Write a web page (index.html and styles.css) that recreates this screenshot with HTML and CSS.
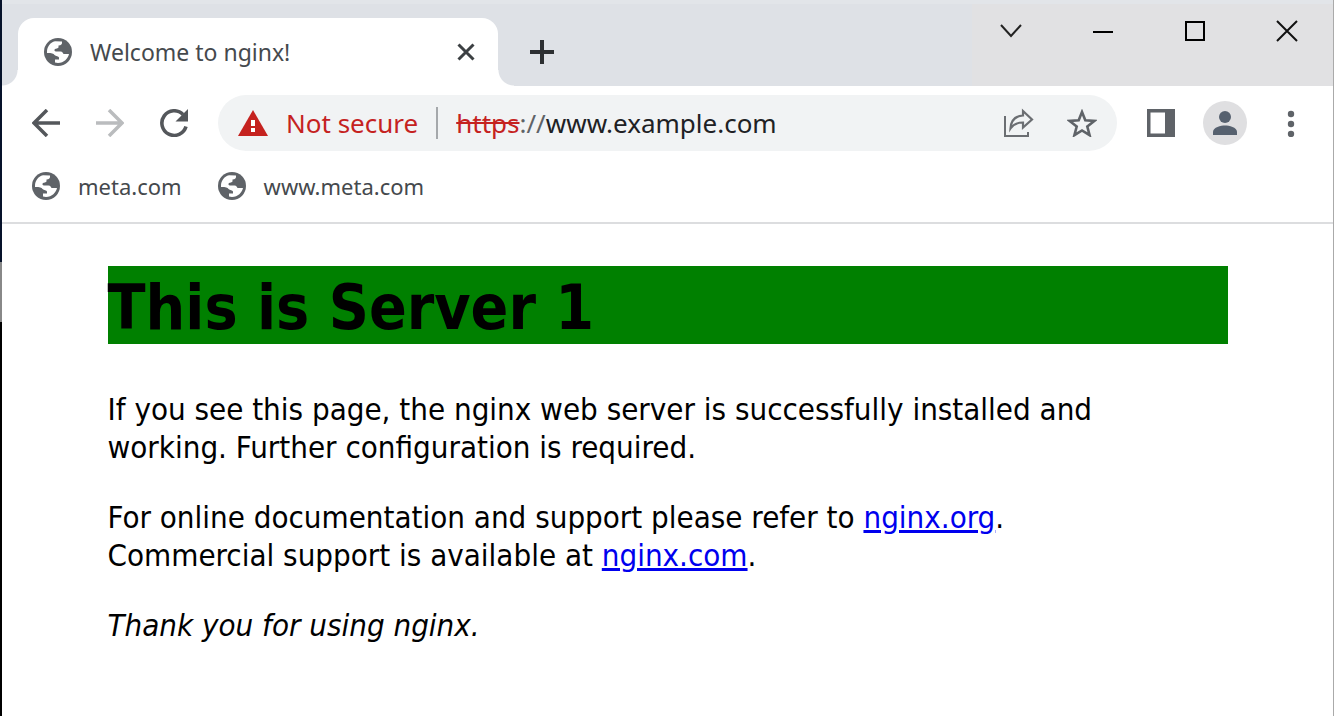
FILE: index.html
```html
<!DOCTYPE html>
<html lang="en">
<head>
<meta charset="utf-8">
<title>Welcome to nginx!</title>
<link rel="stylesheet" href="styles.css">
</head>
<body>
<svg class="defs" aria-hidden="true">
  <symbol id="globe" viewBox="0 0 28 28">
    <circle cx="14" cy="14" r="14" fill="#5f6368"/>
    <path fill="#fff" d="M3 14C3 9 6 4.500 11 3.300L18 3.500C18.500 6 17 7.500 14.500 7.500V9.500C14 10.500 12 10.500 11 11C10 12 10.500 13.500 12 13.500H16.500C18.500 13.500 19 15 19.500 16H25C24 20.500 20 25 14 25L11 24.500V21.500H15V19.500C14.500 18 12 18.500 10.500 17C9.500 15.500 8 15 3 15Z"/>
  </symbol>
</svg>
<div class="window">
  <header class="tabstrip">
    <div class="tab">
      <svg class="globe"><use href="#globe"/></svg>
      <span class="tab-title">Welcome to nginx!</span>
      <button class="icon-btn tab-close" aria-label="Close tab"><svg width="18" height="18" viewBox="0 0 18 18"><path d="M1.500 1.500l15 15M16.500 1.500l-15 15" fill="none" stroke="#3c4043" stroke-width="3"/></svg></button>
    </div>
    <button class="icon-btn new-tab" aria-label="New tab"><svg width="24" height="24" viewBox="0 0 24 24"><path d="M12 0v24M0 12h24" stroke="#2c2f32" stroke-width="4"/></svg></button>
    <div class="caption">
      <button class="icon-btn" aria-label="Search tabs"><svg width="22" height="22" viewBox="0 0 22 22"><path d="M1 5l10 11L21 5" fill="none" stroke="#222" stroke-width="2"/></svg></button>
      <button class="icon-btn" aria-label="Minimize"><svg width="22" height="22" viewBox="0 0 22 22"><path d="M1 12h20" stroke="#000" stroke-width="2"/></svg></button>
      <button class="icon-btn" aria-label="Maximize"><svg width="22" height="22" viewBox="0 0 22 22"><path d="M2 2h18v18H2z" fill="none" stroke="#000" stroke-width="2"/></svg></button>
      <button class="icon-btn" aria-label="Close"><svg width="22" height="22" viewBox="0 0 22 22"><path d="M1 1l20 20M21 1L1 21" stroke="#111" stroke-width="2"/></svg></button>
    </div>
  </header>
  <nav class="toolbar" aria-label="Browser toolbar">
    <button class="icon-btn" aria-label="Back"><svg width="28" height="28" viewBox="0 0 28 28"><path d="M28 14H2M15 1L2 14l13 13" fill="none" stroke="#54575b" stroke-width="3.500"/></svg></button>
    <button class="icon-btn" aria-label="Forward"><svg width="28" height="28" viewBox="0 0 28 28"><path d="M0 14h26M13 1l13 13-13 13" fill="none" stroke="#babcbe" stroke-width="3.500"/></svg></button>
    <button class="icon-btn" aria-label="Reload"><svg width="28" height="28" viewBox="0 0 28 28"><path d="M26 17.500A12.300 12.300 0 1 1 23 5.500" fill="none" stroke="#54575b" stroke-width="3.600"/><path d="M28 0v12.500H15.500z" fill="#54575b"/></svg></button>
    <div class="omnibox">
      <svg width="30" height="26" viewBox="0 0 30 26"><path d="M15 0l15 26H0z" fill="#c5221f"/><path d="M13 10h4v6h-4zM13 18h4v4h-4z" fill="#fff"/></svg>
      <span class="warning">Not secure</span>
      <span class="divider"></span>
      <span class="url"><s>https</s><span class="scheme">://</span>www.example.com</span>
      <button class="icon-btn share" aria-label="Share"><svg width="32" height="30" viewBox="0 0 32 30"><path d="M2 8v20h23v-4" fill="none" stroke="#6b6e72" stroke-width="2"/><path d="M20 3l9 8.500-9 8v-5c-6 0-9.500 1.500-12.500 6C8 13 12 8 20 7.500z" fill="none" stroke="#6b6e72" stroke-width="2.200"/></svg></button>
      <button class="icon-btn star" aria-label="Bookmark"><svg width="30" height="28" viewBox="0 0 30 28"><path d="M15 3l3.300 8.300 9 .6-7 5.700 2.300 8.600L15 21.500l-7.600 4.700 2.300-8.600-7-5.700 9-.6z" fill="none" stroke="#5f6368" stroke-width="2.600"/></svg></button>
    </div>
    <button class="icon-btn" aria-label="Side panel"><svg width="28" height="28" viewBox="0 0 28 28"><path d="M0 0h28v28H0z" fill="#5f6368"/><path d="M3.500 3.500H18v21H3.500z" fill="#fff"/></svg></button>
    <button class="icon-btn avatar" aria-label="Profile"><svg width="26" height="26" viewBox="0 0 26 26"><circle cx="13" cy="7" r="6" fill="#56616f"/><path d="M1 25v-3c0-5 8-6.500 12-6.500S25 17 25 22v3z" fill="#56616f"/></svg></button>
    <button class="icon-btn menu" aria-label="Menu"><svg width="8" height="28" viewBox="0 0 8 28"><g fill="#5f6368"><circle cx="4" cy="5" r="3.200"/><circle cx="4" cy="15" r="3.200"/><circle cx="4" cy="25" r="3.200"/></g></svg></button>
  </nav>
  <nav class="bookmarks" aria-label="Bookmarks">
    <a href="#"><svg class="globe"><use href="#globe"/></svg>meta.com</a>
    <a href="#"><svg class="globe"><use href="#globe"/></svg>www.meta.com</a>
  </nav>
  <main class="page">
    <h1>This is Server 1</h1>
    <p>If you see this page, the nginx web server is successfully installed and<br>working. Further configuration is required.</p>
    <p>For online documentation and support please refer to <a href="#">nginx.org</a>.<br>Commercial support is available at <a href="#">nginx.com</a>.</p>
    <p><em>Thank you for using nginx.</em></p>
  </main>
</div>
</body>
</html>
```

FILE: styles.css
```css
* { box-sizing: border-box; }
body {
  margin: 0;
  background: linear-gradient(#06122a 0 262px, #888 262px 322px, #000 322px);
  font-family: "Noto Sans", "Open Sans", sans-serif;
}
.defs { position: absolute; width: 0; height: 0; }
.window { min-height: 100vh; margin-left: 2px; border-right: 1px solid #aaa; background: #fff; }
.icon-btn { display: flex; flex: none; align-items: center; justify-content: center; padding: 0; border: 0; background: none; }
.icon-btn svg { display: block; }
.globe { width: 28px; height: 28px; flex: none; }

.tabstrip { display: flex; height: 86px; background: linear-gradient(90deg, #dee1e6 0 970px, #e1e1e3 970px); border-top: 4px solid #e2e5e9; }
.tab {
  display: flex; align-items: center; position: relative;
  width: 480px; height: 68px; margin: 14px 0 0 16px; padding: 0 23px 0 26px;
  background: #fff; border-radius: 16px 16px 0 0;
}
.tab::before, .tab::after { content: ""; position: absolute; bottom: 0; width: 16px; height: 16px; }
.tab::before { right: 100%; background: radial-gradient(circle at 0 0, transparent 15px, #fff 16px); }
.tab::after { left: 100%; background: radial-gradient(circle at 100% 0, transparent 15px, #fff 16px); }
.tab-title { flex: 1; margin-left: 18px; font-size: 23px; color: #45494d; }
.new-tab { margin: 14px 0 0 32px; }
.caption { display: flex; height: 54px; margin-left: auto; }
.caption .icon-btn { width: 92px; }

.toolbar { display: flex; align-items: center; gap: 36px; height: 74px; padding: 0 38px 0 30px; }
.omnibox { display: flex; align-items: center; flex: 1; height: 56px; margin: 0 -6px; padding: 0 20px; border-radius: 28px; background: #f1f3f4; font-size: 26px; }
.warning { margin-left: 18px; color: #c5221f; }
.divider { width: 2px; height: 32px; margin: 0 18px; background: #a5a8ab; }
.url { color: #202124; }
.url s { color: #c5221f; }
.scheme { color: #5f6368; }
.share { margin-left: auto; }
.star { margin-left: 32px; }
.avatar { width: 44px; height: 44px; margin: 0 4px 0 -8px; border-radius: 50%; background: #dfdfe1; }

.bookmarks { display: flex; gap: 36px; height: 64px; padding: 0 30px 10px; border-bottom: 2px solid #dcdddf; }
.bookmarks a { display: flex; align-items: center; gap: 18px; font-size: 22px; color: #45494d; text-decoration: none; }

.page { max-width: 1120px; margin: 0 auto; padding: 42px 0; font: 31px/38px "DejaVu Sans Condensed", "DejaVu Sans", sans-serif; color: #000; }
.page h1 { margin: 0 0 46px; padding-top: 6px; font-size: 62px; line-height: 72px; background: green; }
.page p { margin: 0 0 32px; }
.page a { color: #00e; }
```
